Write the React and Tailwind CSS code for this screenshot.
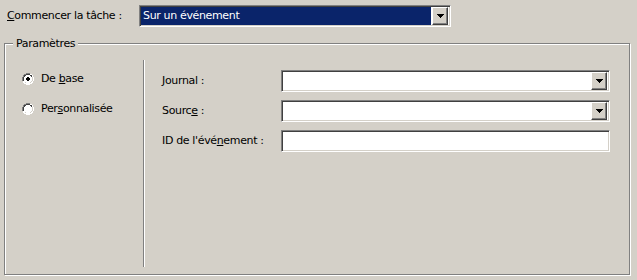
import React from 'react'

const font = "font-['DejaVu_Sans',sans-serif] text-[11px] tracking-[-0.35px] text-black"

function DropButton() {
  return (
    <div className="w-[16px] h-[18px] bg-[#d4d0c8] border border-t-white border-l-white border-b-[#404040] border-r-[#404040] shadow-[inset_-1px_-1px_0_#808080] flex items-center justify-center flex-shrink-0">
      <svg width="7" height="4" viewBox="0 0 7 4">
        <path d="M0 0h7v1h-1v1h-1v1h-1v1h-1v-1h-1v-1h-1v-1h-1z" fill="#000" />
      </svg>
    </div>
  )
}

function Field({ combo }) {
  return (
    <div className="w-[329px] h-[22px] bg-white border border-t-[#808080] border-l-[#808080] border-b-white border-r-white shadow-[inset_1px_1px_0_#404040,inset_-1px_-1px_0_#d4d0c8] flex justify-end items-center pr-[2px]">
      {combo && <DropButton />}
    </div>
  )
}

function Radio({ checked }) {
  return (
    <svg width="12" height="12" viewBox="0 0 12 12" className="flex-shrink-0">
      <path d="M4 0h4v1h2v1h1v2h1v4h-1v2h-1v1h-2v1h-4v-1h-2v-1h-1v-2h-1v-4h1v-2h1v-1h2z" fill="#fff" />
      <path d="M4 0h4v1h-4v1h-2v2h-1v4h-1v-4h1v-2h1v-1h2z" fill="#808080" />
      <path d="M4 1h4v1h-4zM2 2h2v1h-1v1h-1zM8 2h2v2h-1v-1h-1zM1 4h1v4h-1z" fill="#404040" />
      <path d="M10 4h1v4h-1zM9 8h1v1h-1zM8 9h1v1h-1zM3 9h1v1h-1zM4 10h4v-1h1v1h-1v-0z" fill="#d4d0c8" />
      <path d="M11 4h1v4h-1zM10 8h1v2h-2v1h-1v-1h1v-1h1zM4 11h4v1h-4zM2 10h2v1h-2z" fill="#fff" />
      <path d="M3 4h6v4h-6z M4 3h4v6h-4z" fill="#fff" />
      {checked && <path d="M5 4h2v1h1v2h-1v1h-2v-1h-1v-2h1z" fill="#000" />}
    </svg>
  )
}

export default function App() {
  return (
    <div className={`w-[637px] h-[280px] bg-[#d4d0c8] pt-[5px] overflow-hidden ${font}`}>
      {/* Start row */}
      <div className="flex items-center h-[22px] pl-[7px]">
        <span className="w-[132px]"><u>C</u>ommencer la tâche :</span>
        <div className="w-[312px] h-[22px] bg-white border border-t-[#808080] border-l-[#808080] border-b-white border-r-white shadow-[inset_1px_1px_0_#404040,inset_-1px_-1px_0_#d4d0c8] flex items-center p-[1px] pr-[2px]">
          <div className="flex-1 h-full bg-[#0a246a] text-white flex items-center pl-[2px] mr-[1px]">Sur un événement</div>
          <DropButton />
        </div>
      </div>

      {/* Group box */}
      <div className="relative ml-[4px] mt-[16px] w-[626px] h-[232px] border border-[#808080] shadow-[inset_1px_1px_0_#fff,1px_1px_0_#fff] flex pt-[16px] pb-[7px]">
        <span className="absolute left-[8px] top-[-7px] px-[3px] bg-[#d4d0c8] leading-[13px]">Paramètres</span>

        <div className="w-[138px] flex flex-col pl-[17px] pt-[13px] gap-[18px]">
          <div className="flex items-center gap-[7px] h-[12px]">
            <Radio checked />
            <span>De <u>b</u>ase</span>
          </div>
          <div className="flex items-center gap-[7px] h-[12px]">
            <Radio />
            <span>Per<u>s</u>onnalisée</span>
          </div>
        </div>

        <div className="w-[2px] border-l border-l-[#808080] bg-white" />

        <div className="flex flex-col pl-[17px] pt-[10px] gap-[8px]">
          <div className="flex items-center h-[22px]">
            <span className="w-[119px]"><u>J</u>ournal :</span>
            <Field combo />
          </div>
          <div className="flex items-center h-[22px]">
            <span className="w-[119px]">Sourc<u>e</u> :</span>
            <Field combo />
          </div>
          <div className="flex items-center h-[22px]">
            <span className="w-[119px]">ID de l'évé<u>n</u>ement :</span>
            <Field />
          </div>
        </div>
      </div>
    </div>
  )
}
